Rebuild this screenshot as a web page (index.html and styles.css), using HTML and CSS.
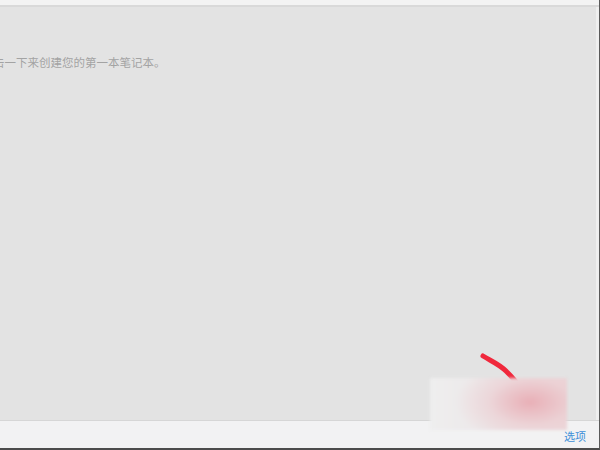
FILE: index.html
```html
<!DOCTYPE html>
<html lang="zh">
<head>
<meta charset="utf-8">
<link rel="stylesheet" href="styles.css">
</head>
<body>
<div class="window">
  <div class="topbar"></div>
  <div class="main">
    <p class="hint">点击一下来创建您的第一本笔记本。</p>
  </div>
  <div class="bottombar">
    <span class="options">选项</span>
  </div>
  <svg class="stroke" width="60" height="50" viewBox="0 0 60 50">
    <path d="M4 4 C12 9 20 12 27 19 C32 24 36 28 40 34" fill="none" stroke="#f0283c" stroke-width="5" stroke-linecap="round"/>
  </svg>
  <div class="blur"></div>
</div>
</body>
</html>
```
FILE: styles.css
```css
html, body {
  margin: 0;
  padding: 0;
  background: #4b4b4b;
}
.window {
  position: relative;
  width: 599px;
  height: 448px;
  display: flex;
  flex-direction: column;
  overflow: hidden;
  border-right: 1px solid #5a5a5a;
  border-bottom: 2px solid #4b4b4b;
  font-family: "Noto Sans CJK SC", "Noto Sans", sans-serif;
}
.topbar {
  height: 5px;
  background: #f3f3f3;
  border-bottom: 2px solid #d9d9d9;
}
.main {
  flex: 1;
  background: #e3e3e3;
  border-right: 3px solid #efefef;
  padding-top: 48px;
}
.hint {
  margin: 0 0 0 -18.5px;
  font-size: 11.5px;
  line-height: 14px;
  color: #a3a3a3;
  white-space: nowrap;
}
.bottombar {
  height: 27px;
  background: #f2f2f3;
  border-top: 1px solid #d6d6d6;
  display: flex;
  align-items: center;
  justify-content: flex-end;
  padding-right: 13px;
}
.options {
  font-size: 11px;
  line-height: 14px;
  color: #3d8fd8;
  margin-top: 2px;
}
.stroke {
  position: absolute;
  left: 479px;
  top: 352px;
}
.blur {
  position: absolute;
  left: 430px;
  top: 378px;
  width: 137px;
  height: 52px;
  background:
    radial-gradient(ellipse 75px 42px at 100px 24px, rgba(232, 170, 178, 0.9), rgba(236, 198, 203, 0.5) 55%, rgba(236, 224, 226, 0) 100%),
    linear-gradient(90deg, #eeeeee 0%, #ece8e9 40%, #ebdadc 100%);
  filter: blur(1.5px);
}
```
